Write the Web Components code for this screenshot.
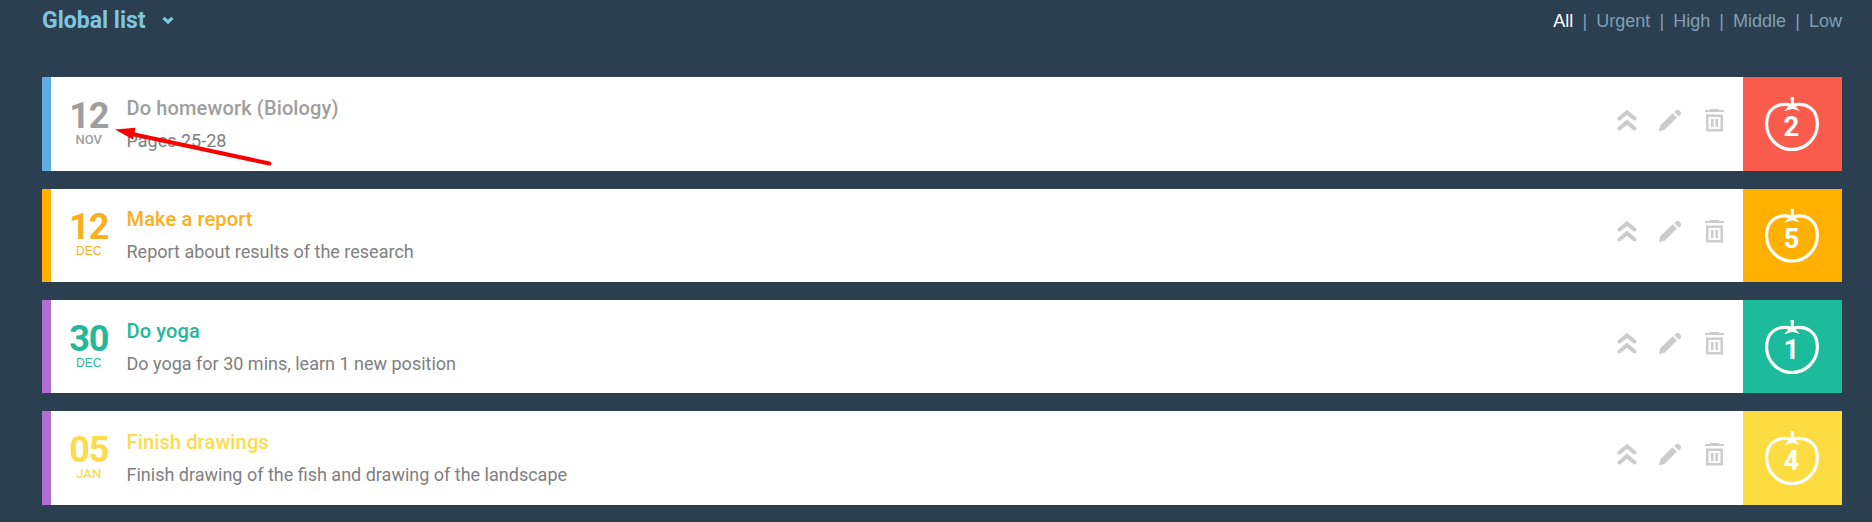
<!DOCTYPE html>
<html lang="en">
<head>
<meta charset="utf-8">
<title>Global list</title>
<style>
body{margin:0;background:#2b3f50;font-family:Roboto,"Liberation Sans",sans-serif;overflow:hidden}
</style>
</head>
<body>
<task-board></task-board>
<script>
const define=(name,html,setup)=>customElements.define(name,class extends HTMLElement{
  connectedCallback(){
    if(this.shadowRoot)return;
    const t=document.createElement('template');
    t.innerHTML=html;
    this.attachShadow({mode:'open'}).append(t.content.cloneNode(true));
    if(setup)setup(this,this.shadowRoot);
  }
});

define('task-actions',`<style>
:host{display:block;color:#ccc}
svg{display:block}
</style>
<svg width="110" height="26" viewBox="0 0 110 26" fill="none" stroke="currentColor">
<path d="M2.5 11.500L10 5.400L17.5 11.500M2.5 21.5L10 15.200L17.5 21.5" stroke-width="4" stroke-linecap="round" stroke-linejoin="miter"/>
<g fill="currentColor" stroke="none">
<path d="M41.700 24.5L43.4 18.300L55.500 6.200L60 10.600L47.700 22.700Z"/>
<path d="M57.2 5L58.5 3.700C60 2.400 61.3 2.500 62.7 3.900C64.2 5.400 64.5 6.700 63.2 8.200L61.700 9.600Z"/>
<path d="M88 3H93V2H102V3H107V5H88Z"/>
<path fill-rule="evenodd" d="M89 7.500H106V24.5H89ZM91.5 10V22H103.5V10Z"/>
<path d="M94 12H96.500V20H94ZM98.500 12H101V20H98.500Z"/>
</g></svg>`);

define('tomato-count',`<style>
:host{display:grid;place-items:center;width:99px;background:var(--tile)}
.mark{display:grid;width:56px;height:56px;transform:translate(-1px,var(--mark-y,1px))}
.mark>*{grid-area:1/1}
.n{place-self:center;font:bold 27.500px/30px Roboto,sans-serif;color:#fff;padding-top:4px}
</style>
<div class="mark"><svg width="56" height="56" viewBox="0 0 56 56">
<path d="M28 8.2C22 6.8 15 7 10 10.5C4.500 14.500 2.600 20.500 2.600 27C2.600 41 14 52.500 28 52.500C42 52.500 53.400 41 53.400 27C53.400 20.500 51.500 14.500 46 10.500C41 7 34 6.800 28 8.200Z" fill="none" stroke="#fff" stroke-width="3.200"/>
<path d="M26.500 0H30L29.700 7L36 8L31.500 9.500L36 14L28.500 11.700L20 14.300L24.500 9.500L20 8L27 7Z" fill="#fff"/>
</svg><span class="n"><slot></slot></span></div>`);

define('task-row',`<style>
:host{display:flex;height:var(--h,94px);box-sizing:border-box;background:#fff;border-left:9px solid var(--edge);color:var(--tone)}
.date{width:75.500px;text-align:center;display:flex;flex-direction:column;align-items:center;padding-top:calc(21px - var(--lift,0px))}
.day{font:bold 36px/36px Roboto,sans-serif;letter-spacing:-1.200px}
.month{font:var(--month,12px "Liberation Sans",sans-serif);line-height:14px;margin-top:-1px}
.text{flex:1;padding-top:calc(19px - var(--lift,0px))}
.title{font-size:20px;line-height:24px;font-weight:500;letter-spacing:.14px}
.note{font-size:18px;line-height:24px;color:#808080;margin-top:9px}
task-actions{margin:calc(30px - var(--lift,0px)) 16px 0 0}
</style>
<div class="date"><div class="day"></div><div class="month"></div></div>
<div class="text"><div class="title"></div><div class="note"><slot></slot></div></div>
<task-actions></task-actions><tomato-count></tomato-count>`,(el,root)=>{
  for(const key of ['day','month','title'])root.querySelector('.'+key).textContent=el.getAttribute('data-'+key);
  root.querySelector('tomato-count').textContent=el.dataset.count;
});

define('list-heading',`<style>
:host{display:flex;justify-content:space-between;height:77px;color:#7fc7e1}
.name{display:flex;font-size:23px;line-height:26px;font-weight:700;padding-top:8px}
.name svg{margin:8px 0 0 16px}
nav{display:flex;gap:9.100px;font:18px/22px "Liberation Sans",sans-serif;color:#7f9fb5;padding-top:10px}
.on{color:#fff}
</style>
<div class="name"><span>Global list</span><svg width="12" height="10" viewBox="0 0 12 10"><path d="M1.500 1.800L6 6L10.500 1.800" fill="none" stroke="currentColor" stroke-width="3.200"/></svg></div>
<nav><span class="on">All</span><span>|</span><span>Urgent</span><span>|</span><span>High</span><span>|</span><span>Middle</span><span>|</span><span>Low</span></nav>`);

define('pointer-arrow',`<style>
:host{position:absolute;left:115px;top:127px;width:158px;height:40px;pointer-events:none}
svg{display:block}
</style>
<svg width="158" height="40" viewBox="0 0 158 40" fill="#f80000"><path d="M0 2.500L20.500 .8L18 12.500Z"/><path d="M17 7L154.300 36.500" stroke="#f80000" stroke-width="4" stroke-linecap="round"/></svg>`);

define('task-board',`<style>
:host{display:block;position:relative;box-sizing:border-box;height:522px;padding:0 30px 0 42px}
.rows{display:flex;flex-direction:column;gap:18px}
.strong{--month:500 13px Roboto,sans-serif}
.short{--h:93px}
.lifted{--lift:1px;--mark-y:.5px}
</style>
<list-heading></list-heading>
<div class="rows">
<task-row class="strong" data-day="12" data-month="NOV" data-title="Do homework (Biology)" data-count="2" style="--edge:#5dade2;--tone:#9e9e9e;--tile:#f95c4d">Pages 25-28</task-row>
<task-row class="short lifted" data-day="12" data-month="DEC" data-title="Make a report" data-count="5" style="--edge:#ffb000;--tone:#fbaf20;--tile:#ffb000">Report about results of the research</task-row>
<task-row class="short" data-day="30" data-month="DEC" data-title="Do yoga" data-count="1" style="--edge:#b36fd0;--tone:#25b898;--tile:#1cbb9b">Do yoga for 30 mins, learn 1 new position</task-row>
<task-row class="strong" data-day="05" data-month="JAN" data-title="Finish drawings" data-count="4" style="--edge:#b36fd0;--tone:#fddb4a;--tile:#fddc42">Finish drawing of the fish and drawing of the landscape</task-row>
</div>
<pointer-arrow></pointer-arrow>`);
</script>
</body>
</html>
